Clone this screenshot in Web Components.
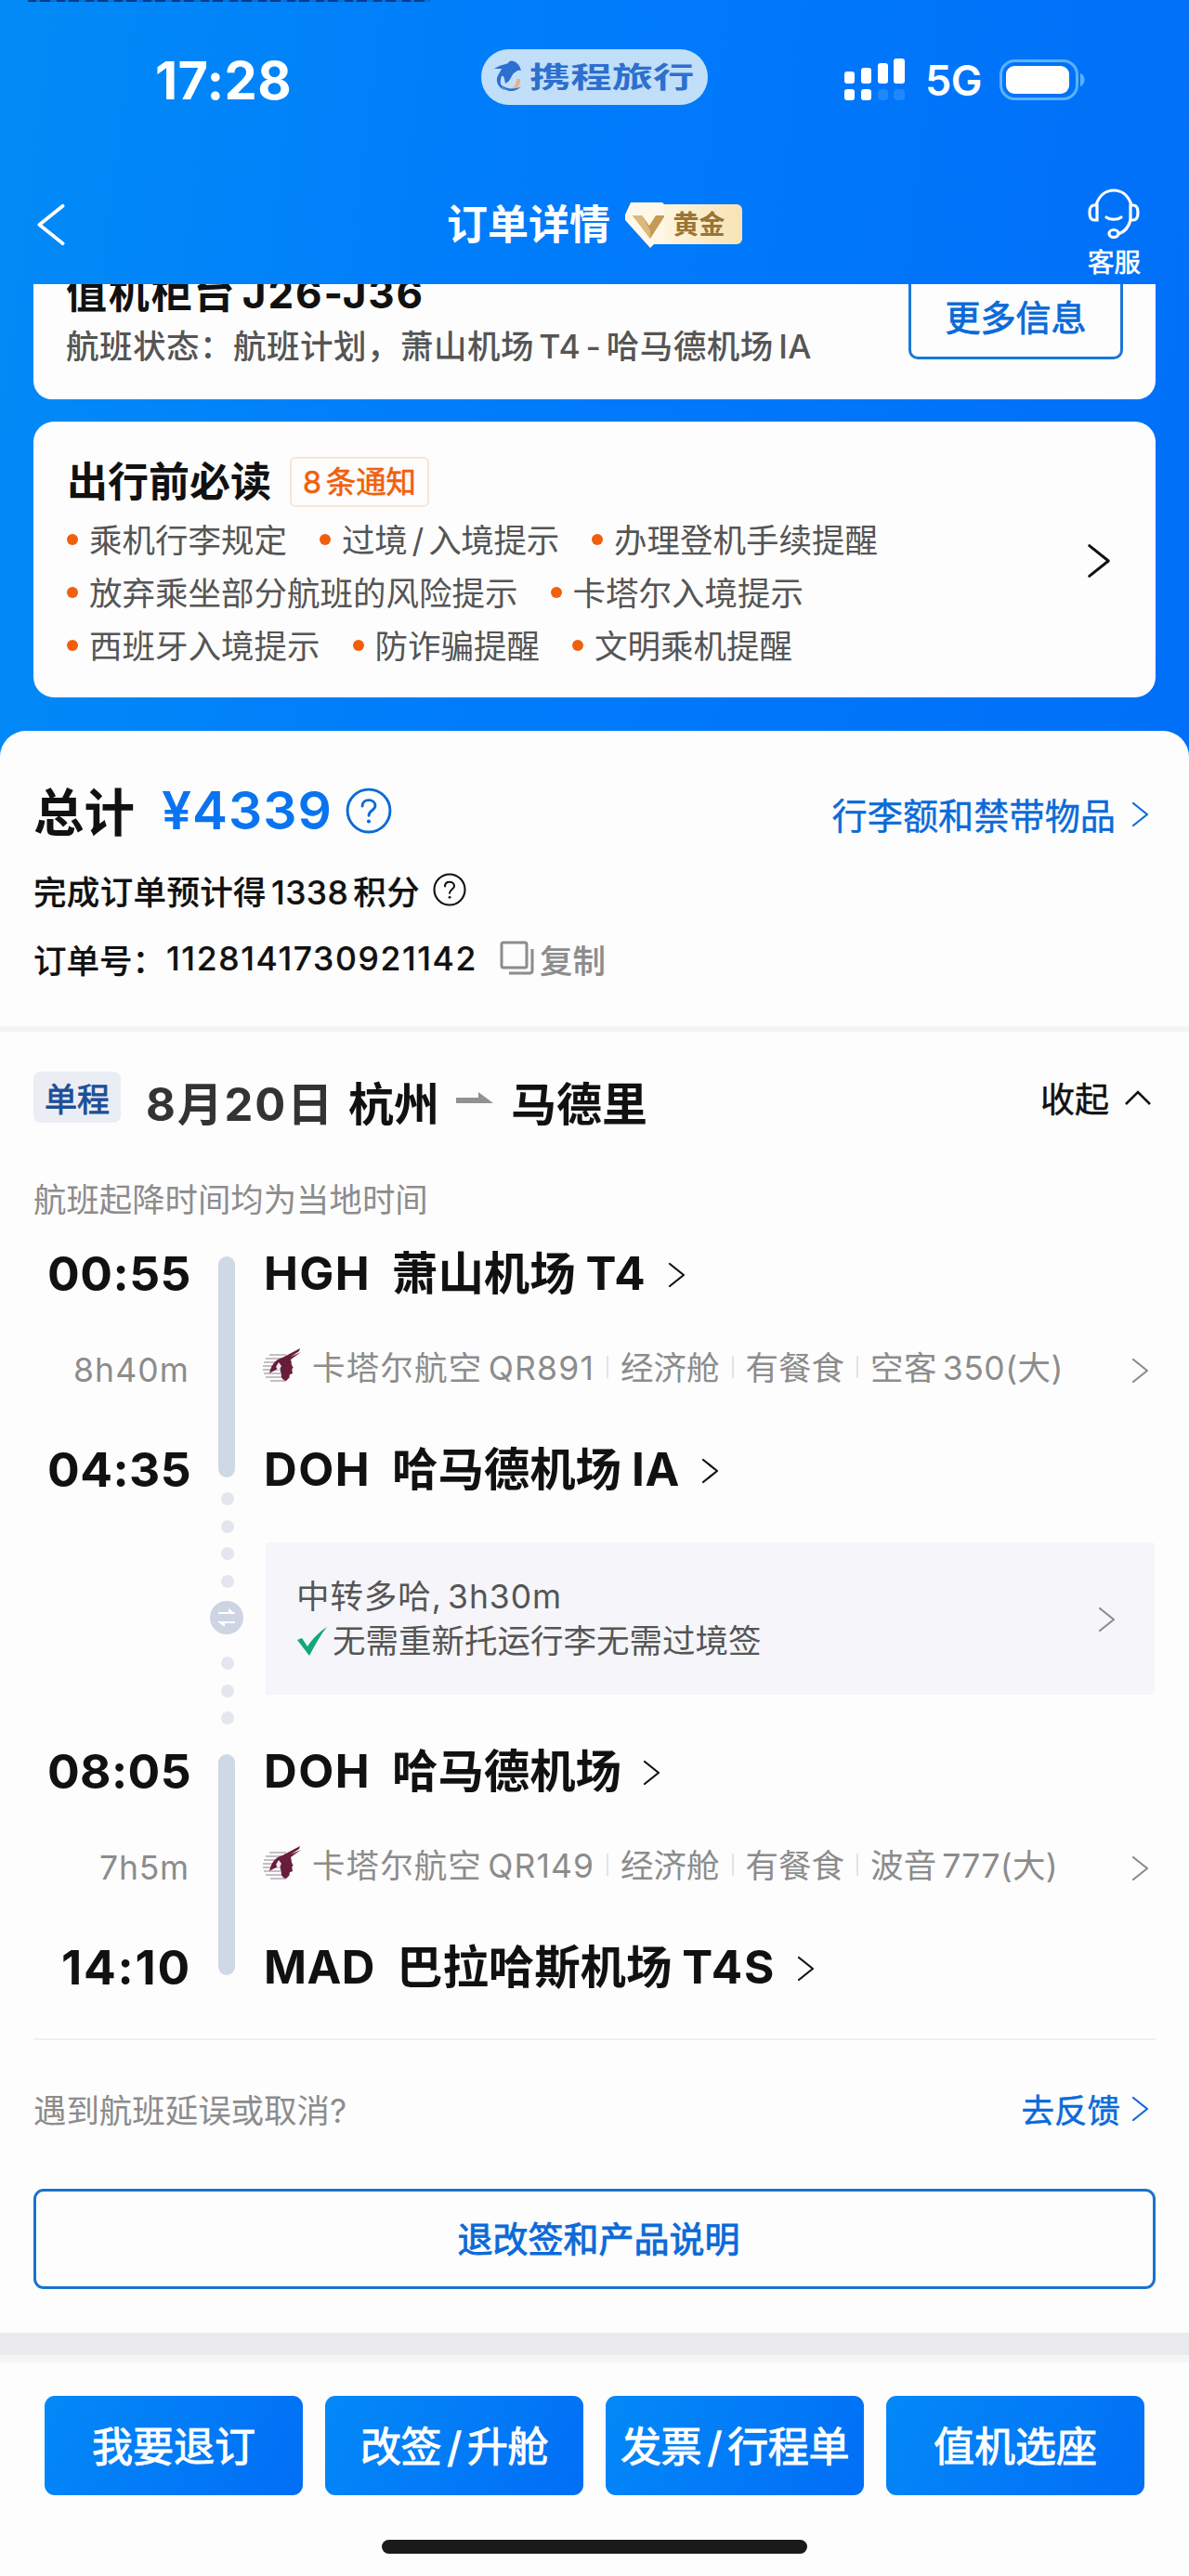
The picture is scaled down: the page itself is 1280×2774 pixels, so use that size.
<!DOCTYPE html>
<html lang="zh-CN">
<head>
<meta charset="utf-8">
<title>订单详情</title>
<style>
  body {
    margin: 0;
    background: #fdfdfd;
    color: #111;
    font-family: Inter, "Noto Sans CJK SC", sans-serif;
  }
</style>
</head>
<body>
<order-page></order-page>

<script>
const define = (name, html, init) => {
  const template = document.createElement("template")
  template.innerHTML = html
  customElements.define(name, class extends HTMLElement {
    connectedCallback() {
      if (this.shadowRoot) return
      this.attachShadow({ mode: "open" })
      this.shadowRoot.appendChild(template.content.cloneNode(true))
      if (init) init(this, this.shadowRoot)
    }
  })
}

// Text spread over a given width by letter spacing
class FitText extends HTMLElement {

  constructor() {
    super()
    this.attachShadow({ mode: "open" })
    this.shadowRoot.innerHTML = /*html*/`
      <style>
        :host { display: block; white-space: nowrap; flex: none; }
        span { display: inline-block; white-space: pre; vertical-align: top; word-spacing: -0.13em; }
      </style>
      <span><slot></slot></span>
    `
  }

  connectedCallback() {
    if (this.hasAttribute("w")) this.fit(this.textContent, Number(this.getAttribute("w")))
  }

  fit(text, width) {
    if (this.textContent !== text) this.textContent = text
    const span = this.shadowRoot.querySelector("span")
    span.style.letterSpacing = "0px"
    const natural = span.getBoundingClientRect().width
    span.style.letterSpacing = (width - natural) / text.length + "px"
    this.style.width = width + "px"
  }

}

window.customElements.define("fit-text", FitText)

// Attributes hold "text|width" pairs
const fill = (element, value) => {
  const [text, width] = value.split("|")
  element.fit(text, Number(width))
}

define("arrow-icon", /*html*/`
  <style>
    :host { display: block; flex: none; width: 19px; height: 28px; }
    svg { display: block; width: 100%; height: 100%; }
    :host([dir="left"]) svg { transform: scaleX(-1); }
  </style>
  <svg viewBox="0 0 19 28" fill="none" stroke="currentColor" stroke-width="2.2" stroke-linejoin="round" stroke-linecap="round"><path d="M2 2L17 14L2 26"/></svg>
`)

define("help-icon", /*html*/`
  <style>
    :host { display: block; flex: none; width: 36px; height: 36px; }
    svg { display: block; width: 100%; height: 100%; }
  </style>
  <svg viewBox="0 0 36 36" fill="none" stroke="currentColor" stroke-width="2.1" stroke-linecap="round">
    <circle cx="18" cy="18" r="16.5"/>
    <path d="M13 14.5C13 11.5 15.2 9.8 18 9.8S23 11.6 23 14.2C23 17.8 18 17.7 18 21.8"/>
    <circle cx="18" cy="26.3" r="1" fill="currentColor" stroke-width="1"/>
  </svg>
`)

define("status-bar", /*html*/`
  <style>
    :host { display: flex; align-items: center; height: 174px; color: #fff; }
    .time { margin-left: 167px; font-size: 56px; line-height: 60px; font-weight: 700; }
    .pill {
      display: flex; align-items: center; box-sizing: border-box;
      width: 244px; height: 60px; margin-left: 204px; margin-top: -8px; padding-left: 13px;
      border-radius: 30px; background: #c1dff9; color: #2e6fce;
    }
    .brand { width: 178px; margin-left: 5px; }
    .brand span {
      display: block; width: 124px; font-size: 31px; line-height: 40px; font-weight: 700;
      transform: scaleX(1.43); transform-origin: 0 50%;
    }
    .signal { margin-left: 146px; margin-top: -3px; }
    .net { margin-left: 20px; font-size: 45px; line-height: 50px; font-weight: 600; }
    .battery { margin-left: 19px; margin-top: -2px; }
    svg { display: block; flex: none; }
  </style>
  <fit-text class="time" w="147">17:28</fit-text>
  <div class="pill">
    <svg width="34" height="36" viewBox="0 0 34 36">
      <path d="M1 9C7 5 11 5 16 3C17 0 20 0 22 1C27 3 29 7 30 11C26 10 25 12 22 14C19 17 19 22 13 25C12 20 12 16 9 17C7 22 7 28 13 32C8 31 3 26 4 19C5 15 8 12 9 9Z" fill="#2b6fd1"/>
      <path d="M29 20C30 28 24 33 16 32C21 31 25 27 25 20Z" fill="#e9b184"/>
      <path d="M8 26C12 34 23 36 30 28C25 31 15 32 8 26Z" fill="#2b6fd1"/>
    </svg>
    <div class="brand"><span>携程旅行</span></div>
  </div>
  <svg class="signal" width="68" height="46" viewBox="0 0 68 46" fill="#fff">
    <rect x="1" y="14" width="11" height="13" rx="3"/><rect x="19" y="10" width="11" height="17" rx="3"/>
    <rect x="37" y="5" width="11" height="22" rx="3"/><rect x="54" y="0" width="12" height="27" rx="3"/>
    <rect x="1" y="33" width="11" height="12" rx="3"/><rect x="19" y="33" width="11" height="12" rx="3"/>
    <g fill="#2088ff"><rect x="37" y="33" width="11" height="12" rx="4"/><rect x="54" y="33" width="12" height="12" rx="4"/></g>
  </svg>
  <fit-text class="net" w="61">5G</fit-text>
  <svg class="battery" width="94" height="44" viewBox="0 0 94 44">
    <rect x="1.5" y="1.5" width="82" height="41" rx="15" fill="none" stroke="#5cb2ff" stroke-width="3"/>
    <rect x="7" y="7" width="68" height="30" rx="9" fill="#fff"/>
    <path d="M87 15C93 17 93 27 87 29Z" fill="#5cb2ff"/>
  </svg>
`)

define("nav-bar", /*html*/`
  <style>
    :host { display: grid; grid-template-columns: 1fr auto 1fr; align-items: center; height: 132px; color: #fff; }
    .back { width: 32px; height: 52px; margin: 4px 0 0 39px; }
    .title { display: flex; align-items: center; margin-top: 3px; font-size: 44px; line-height: 60px; font-weight: 700; }
    svg { display: block; }
    .level { display: flex; align-items: center; margin-left: 15px; }
    .gold {
      display: flex; align-items: center; justify-content: center; box-sizing: border-box;
      width: 84px; height: 43px; margin-left: -1px; padding-right: 9px; border-radius: 0 6px 6px 0;
      background: linear-gradient(90deg, #fdf5de, #f7e3b4); color: #9c7433;
      font-size: 28px; font-weight: 700;
    }
    .service {
      justify-self: end; width: 58px; margin-right: 51px; margin-top: 23px;
      font-size: 28.5px; line-height: 34px; -webkit-text-stroke: 0.6px;
    }
    .service svg { margin-bottom: 9px; }
  </style>
  <arrow-icon class="back" dir="left"></arrow-icon>
  <div class="title">订单详情
    <div class="level">
      <svg width="44" height="50" viewBox="0 0 44 50">
        <path d="M7 1H41L44 4V46H32L28 50L1 20V14Z" fill="#fff8e8"/>
        <path d="M9 15H19L27 26L34 15H44L28 40Z" fill="#c49a55"/>
        <path d="M9 15H19L28 31V40Z" fill="#dcb87c"/>
      </svg>
      <div class="gold">黄金</div>
    </div>
  </div>
  <div class="service">
    <svg width="58" height="54" viewBox="0 0 58 54" fill="none" stroke="#fff" stroke-width="3.2" stroke-linecap="round">
      <path d="M9 18C12 8 19 2 28 2S44 8 47 18"/>
      <path d="M10 18H7C4 18 2 21 2 26S4 34 7 34H10ZM46 18H49C52 18 54 21 54 26S52 34 49 34H46Z"/>
      <path d="M20 31C24 34 32 34 36 31"/>
      <path d="M46 34C44 42 39 47 33 49"/>
      <ellipse cx="28" cy="48.5" rx="5" ry="4"/>
    </svg>
    客服
  </div>
`)

define("status-card", /*html*/`
  <style>
    :host {
      display: flex; justify-content: space-between; box-sizing: border-box; overflow: hidden;
      height: 124px; margin: 0 36px; padding: 0 35px;
      background: #fdfdfd; border-radius: 0 0 20px 20px;
    }
    .counter { margin-top: -15px; font-size: 44px; line-height: 50px; height: 50px; font-weight: 700; }
    .state { margin-top: 10px; font-size: 35.5px; line-height: 46px; font-weight: 500; color: #555; }
    .more {
      box-sizing: border-box; width: 231px; height: 108px; margin-top: -27px;
      border: 3px solid #1a78d6; border-radius: 10px;
      font-size: 38px; line-height: 120px; text-align: center; color: #0b6ad8; -webkit-text-stroke: 0.9px;
    }
  </style>
  <div>
    <fit-text class="counter" w="386">值机柜台 J26-J36</fit-text>
    <fit-text class="state" w="803">航班状态：航班计划，萧山机场 T4 - 哈马德机场 IA</fit-text>
  </div>
  <div class="more">更多信息</div>
`)

define("notice-item", /*html*/`
  <style>
    :host { display: flex; align-items: center; }
    i { width: 12px; height: 12px; margin-top: 3px; margin-right: 12px; border-radius: 50%; background: #f0600c; }
  </style>
  <i></i><slot></slot>
`)

define("notice-card", /*html*/`
  <style>
    :host {
      display: flex; justify-content: space-between; align-items: center; box-sizing: border-box;
      height: 297px; margin: 24px 36px 0; padding: 0 48px 0 36px;
      background: #fdfdfd; border-radius: 22px;
    }
    .list { align-self: flex-start; padding-top: 38px; }
    .head { display: flex; align-items: center; font-size: 44px; line-height: 54px; font-weight: 700; }
    .count {
      box-sizing: border-box; width: 150px; height: 54px; margin-left: 20px; padding-left: 12px;
      border: 2px solid #f6e6d6; border-radius: 6px;
      color: #f0600c; font-size: 32.5px; line-height: 52px; font-weight: 400; -webkit-text-stroke: 0.6px;
    }
    .row { display: flex; gap: 35px; height: 57px; font-size: 35.5px; color: #555; }
    .head + .row { margin-top: 5px; }
    arrow-icon { width: 26px; height: 42px; margin-top: 3px; }
  </style>
  <div class="list">
    <div class="head">出行前必读<div class="count"><fit-text w="122">8 条通知</fit-text></div></div>
    <div class="row"><notice-item>乘机行李规定</notice-item><notice-item><fit-text w="234">过境 / 入境提示</fit-text></notice-item><notice-item>办理登机手续提醒</notice-item></div>
    <div class="row"><notice-item>放弃乘坐部分航班的风险提示</notice-item><notice-item>卡塔尔入境提示</notice-item></div>
    <div class="row"><notice-item>西班牙入境提示</notice-item><notice-item>防诈骗提醒</notice-item><notice-item>文明乘机提醒</notice-item></div>
  </div>
  <arrow-icon></arrow-icon>
`)

define("order-summary", /*html*/`
  <style>
    :host {
      display: block; box-sizing: border-box; height: 324px; padding: 50px 43px 0 36px;
      background: #fdfdfd; border-radius: 28px 28px 0 0; border-bottom: 6px solid #f4f4f5;
    }
    div { display: flex; align-items: center; }
    .total { height: 68px; font-size: 54.5px; font-weight: 700; }
    .price { margin-top: 3px; margin-left: 29px; font-size: 57px; font-weight: 600; color: #0a74f0; }
    .total help-icon { width: 50px; height: 50px; margin-top: 4px; margin-left: 14px; color: #0a6ad8; }
    .link { margin-left: auto; margin-top: 11px; font-size: 38.2px; font-weight: 400; color: #0b6ad8; -webkit-text-stroke: 0.4px; }
    .link arrow-icon { margin-left: 17px; }
    .line { height: 74px; font-size: 35.5px; font-weight: 500; -webkit-text-stroke: 0.2px; }
    .total + .line { margin-top: 16px; }
    .line help-icon { margin-left: 14px; }
    .number { margin-left: 1px; }
    .copy { margin-left: 24px; color: #8c8c8c; }
    .copy svg { margin-right: 4px; }
  </style>
  <div class="total">总计<fit-text class="price" w="184">¥4339</fit-text><help-icon></help-icon>
    <div class="link">行李额和禁带物品<arrow-icon></arrow-icon></div>
  </div>
  <div class="line"><fit-text w="416">完成订单预计得 1338 积分</fit-text><help-icon></help-icon></div>
  <div class="line">订单号：<fit-text class="number" w="335">1128141730921142</fit-text>
    <div class="copy">
      <svg width="39" height="38" viewBox="0 0 39 38" fill="none" stroke="#8c8c8c" stroke-width="3"><rect x="2" y="2" width="27" height="27" rx="2"/><path d="M35 9V32Q35 35 32 35H10"/></svg>复制
    </div>
  </div>
`)

define("trip-head", /*html*/`
  <style>
    :host { display: block; padding: 0 39px 0 36px; }
    div { display: flex; align-items: center; }
    .route { height: 149px; font-size: 49px; font-weight: 700; }
    .tag {
      justify-content: center; width: 94px; height: 55px; margin-top: -9px; margin-right: 27px; border-radius: 8px;
      background: #ebedf5; color: #1d4f96; font-size: 35px; font-weight: 400; -webkit-text-stroke: 0.9px;
    }
    .date { margin-right: 15px; color: #333; font-weight: 700; }
    .to { margin: -8px 19px 0 18px; }
    .fold { margin-left: auto; margin-top: -8px; font-size: 37px; font-weight: 400; -webkit-text-stroke: 0.5px; }
    .fold svg { margin-left: 15px; }
    .note { height: 52px; margin-top: 3px; font-size: 35.4px; color: #8c8c8c; }
  </style>
  <div class="route">
    <div class="tag">单程</div>
    <fit-text class="date" w="203">8月20日</fit-text>
    <span>杭州</span>
    <svg class="to" width="40" height="12" viewBox="0 0 40 12"><path d="M0 6H24V0L40 12H0Z" fill="#929292"/></svg>
    <span>马德里</span>
    <div class="fold">收起<svg width="32" height="20" viewBox="0 0 32 20" fill="none" stroke="#111" stroke-width="2.6"><path d="M3 17L16 4L29 17"/></svg></div>
  </div>
  <div class="note">航班起降时间均为当地时间</div>
`)

define("airport-name", /*html*/`
  <style>
    :host { display: flex; align-items: center; font-size: 49.4px; line-height: 50px; font-weight: 700; }
    .code { margin-left: -2px; }
    .zh { margin-left: 23px; }
    .terminal { margin-left: 11px; }
    arrow-icon { margin-left: 23px; margin-top: 4px; }
  </style>
  <fit-text class="code"></fit-text><span class="zh"></span><fit-text class="terminal"></fit-text><arrow-icon></arrow-icon>
`, (host, root) => {
  fill(root.querySelector(".code"), host.getAttribute("code"))
  root.querySelector(".zh").textContent = host.getAttribute("name")
  const terminal = root.querySelector(".terminal")
  if (host.hasAttribute("terminal")) {
    fill(terminal, host.getAttribute("terminal"))
  } else {
    terminal.remove()
  }
})

define("airline-logo", /*html*/`
  <style>
    :host { display: block; flex: none; width: 42px; height: 38px; }
    svg { display: block; }
  </style>
  <svg width="42" height="38" viewBox="0 0 42 38">
    <g stroke="#c3bfc5" stroke-width="2"><path d="M7 7H25M3 11H29M1 15H31M0 19H32M0 23H32M1 27H31M3 31H29M8 35H25"/></g>
    <path d="M7 27C9 18 13 12 21 10L40 0L39 3L30 9L41 4L30 12C31 15 30 18 33 21L31 22L32 27L29 28L28 32L25 35C21 34 19 31 20 27C18 25 20 21 17 19C15 24 11 24 7 27Z" fill="#681d3b"/>
    <path d="M17 15L20 19L17 24L14 20Z" fill="#f5edf1"/>
  </svg>
`)

define("flight-leg", /*html*/`
  <style>
    :host {
      display: grid; grid-template-columns: 168px 82px 1fr; grid-template-rows: 50px 161px 50px;
      align-items: center; padding: 0 43px 0 36px;
    }
    .depart, .arrive {
      grid-column: 1; justify-self: end; margin-right: -2px;
      font-size: 51.5px; line-height: 50px; font-weight: 700;
    }
    .depart { grid-row: 1; }
    .arrive { grid-row: 3; }
    .duration { grid-column: 1; grid-row: 2; justify-self: end; margin-top: -2px; font-size: 35.5px; color: #8c8c8c; }
    .bar {
      grid-column: 2; grid-row: 1 / 4; justify-self: center;
      width: 18px; height: 238px; margin: -9px 2px 0 0; border-radius: 9px; background: #cfd8e5;
    }
    .flight { display: flex; align-items: center; grid-column: 3; grid-row: 2; font-size: 35.5px; color: #8c8c8c; }
    .flight > * { margin-top: -12px; }
    airline-logo { margin-left: -3px; margin-right: 11px; }
    .flight i { width: 2px; height: 24px; margin: -9px 13px 0; background: #e3e3e6; }
    .flight arrow-icon { margin-left: auto; margin-top: -2px; }
    ::slotted(airport-name) { grid-column: 3; }
    ::slotted([slot="from"]) { grid-row: 1; }
    ::slotted([slot="to"]) { grid-row: 3; }
  </style>
  <fit-text class="depart"></fit-text>
  <slot name="from"></slot>
  <fit-text class="duration"></fit-text>
  <div class="bar"></div>
  <div class="flight">
    <airline-logo></airline-logo>
    <fit-text class="carrier"></fit-text>
    <i></i><span>经济舱</span><i></i><span>有餐食</span><i></i>
    <fit-text class="plane"></fit-text>
    <arrow-icon></arrow-icon>
  </div>
  <fit-text class="arrive"></fit-text>
  <slot name="to"></slot>
`, (host, root) => {
  for (const name of ["depart", "duration", "carrier", "plane", "arrive"]) {
    fill(root.querySelector("." + name), host.getAttribute(name))
  }
})

define("transfer-info", /*html*/`
  <style>
    :host { display: grid; grid-template-columns: 82px 1fr; height: 275px; padding: 0 37px 0 204px; }
    .rail { display: flex; flex-direction: column; align-items: center; gap: 15.5px; }
    .rail i { width: 14px; height: 14px; border-radius: 50%; background: #e3e6ee; }
    .rail svg { display: block; margin: -1.5px 2px 9px 0; }
    .panel {
      display: flex; align-items: center; justify-content: space-between; box-sizing: border-box;
      height: 164px; margin-top: 54px; padding: 2px 42px 0 33px; background: #f5f5fa; border-radius: 3px;
      font-size: 35.5px; line-height: 48px; color: #555;
    }
    .ok { display: flex; align-items: center; }
    .ok svg { margin-right: 5px; }
    arrow-icon { color: #8c8c8c; }
  </style>
  <div class="rail">
    <i></i><i></i><i></i><i></i>
    <svg width="36" height="36" viewBox="0 0 36 36"><circle cx="18" cy="18" r="18" fill="#cdd5e2"/><path d="M9 12H20V8L28 14H9ZM27 24H16V28L8 22H27Z" fill="#fff"/></svg>
    <i></i><i></i><i></i>
  </div>
  <div class="panel">
    <div>
      <fit-text w="286">中转多哈, 3h30m</fit-text>
      <div class="ok"><svg width="34" height="32" viewBox="0 0 34 32"><path d="M1 14L6 12L12 21C18 12 24 6 33 0C25 10 20 20 14 31Z" fill="#12a877"/></svg>无需重新托运行李无需过境签</div>
    </div>
    <arrow-icon></arrow-icon>
  </div>
`)

define("order-help", /*html*/`
  <style>
    :host { display: block; box-sizing: border-box; height: 369px; padding-top: 52px; }
    .ask {
      display: flex; align-items: center; justify-content: space-between; box-sizing: border-box; height: 148px;
      margin: 0 36px; padding-right: 7px; border-top: 2px solid #efeff0; font-size: 35.5px; color: #8c8c8c;
    }
    .go { display: flex; align-items: center; color: #0b6ad8; -webkit-text-stroke: 0.5px; }
    .go arrow-icon { margin-left: 12px; margin-top: 2px; }
    .rules {
      box-sizing: border-box; height: 108px; margin: 14px 36px 0; border: 3px solid #1a72cc; border-radius: 11px;
      font-size: 38px; line-height: 102px; text-indent: 9px; text-align: center; color: #0b6ad8; -webkit-text-stroke: 0.9px;
    }
  </style>
  <div class="ask"><fit-text w="337">遇到航班延误或取消?</fit-text><div class="go">去反馈<arrow-icon></arrow-icon></div></div>
  <div class="rules">退改签和产品说明</div>
`)

define("action-button", /*html*/`
  <style>
    :host {
      display: flex; align-items: center; justify-content: center; box-sizing: border-box;
      height: 107px; padding-bottom: 3px; border-radius: 11px;
      background: linear-gradient(120deg, #0389f8, #016ef6); color: #fff;
      font-size: 44px; -webkit-text-stroke: 1px;
    }
  </style>
  <slot></slot>
`)

define("action-bar", /*html*/`
  <style>
    :host { display: block; border-top: 24px solid #ebebef; }
    .fade { height: 8px; background: #f5f5f6; }
    .buttons { display: grid; grid-template-columns: repeat(4, 278px); gap: 24px; padding: 36px 48px 0; }
    .home { width: 458px; height: 15px; margin: 48px auto 0; border-radius: 8px; background: #1a1a1a; }
  </style>
  <div class="fade"></div>
  <div class="buttons">
    <action-button>我要退订</action-button>
    <action-button><fit-text w="202">改签 / 升舱</fit-text></action-button>
    <action-button><fit-text w="246">发票 / 行程单</fit-text></action-button>
    <action-button>值机选座</action-button>
  </div>
  <div class="home"></div>
`)

define("order-page", /*html*/`
  <style>
    :host { display: block; width: 1280px; height: 2774px; overflow: hidden; background: #fdfdfd; }
    .top {
      height: 787px;
      padding-bottom: 40px;
      margin-bottom: -40px;
      background: linear-gradient(97deg, #028bf6 0%, #007efa 35%, #0078fb 60%, #006ff8 100%);
    }
    .edge {
      width: 434px; height: 2px; margin-left: 30px;
      background: repeating-linear-gradient(90deg, #0b3a86 0 9px, #056fd8 9px 13px, #0b3a86 13px 24px, #056fd8 24px 31px);
    }
    status-bar { margin-top: -2px; }
    .first { margin-top: 31px; }
  </style>
  <div class="top">
    <div class="edge"></div>
    <status-bar></status-bar>
    <nav-bar></nav-bar>
    <status-card></status-card>
    <notice-card></notice-card>
  </div>
  <order-summary></order-summary>
  <trip-head></trip-head>
  <flight-leg class="first" depart="00:55|155" arrive="04:35|155" duration="8h40m|125" carrier="卡塔尔航空 QR891|304" plane="空客 350(大)|208">
    <airport-name slot="from" code="HGH|115" name="萧山机场" terminal="T4|65"></airport-name>
    <airport-name slot="to" code="DOH|115" name="哈马德机场" terminal="IA|52"></airport-name>
  </flight-leg>
  <transfer-info></transfer-info>
  <flight-leg depart="08:05|155" arrive="14:10|140" duration="7h5m|97" carrier="卡塔尔航空 QR149|304" plane="波音 777(大)|202">
    <airport-name slot="from" code="DOH|115" name="哈马德机场"></airport-name>
    <airport-name slot="to" code="MAD|120" name="巴拉哈斯机场" terminal="T4S|101"></airport-name>
  </flight-leg>
  <order-help></order-help>
  <action-bar></action-bar>
`)
</script>
</body>
</html>
